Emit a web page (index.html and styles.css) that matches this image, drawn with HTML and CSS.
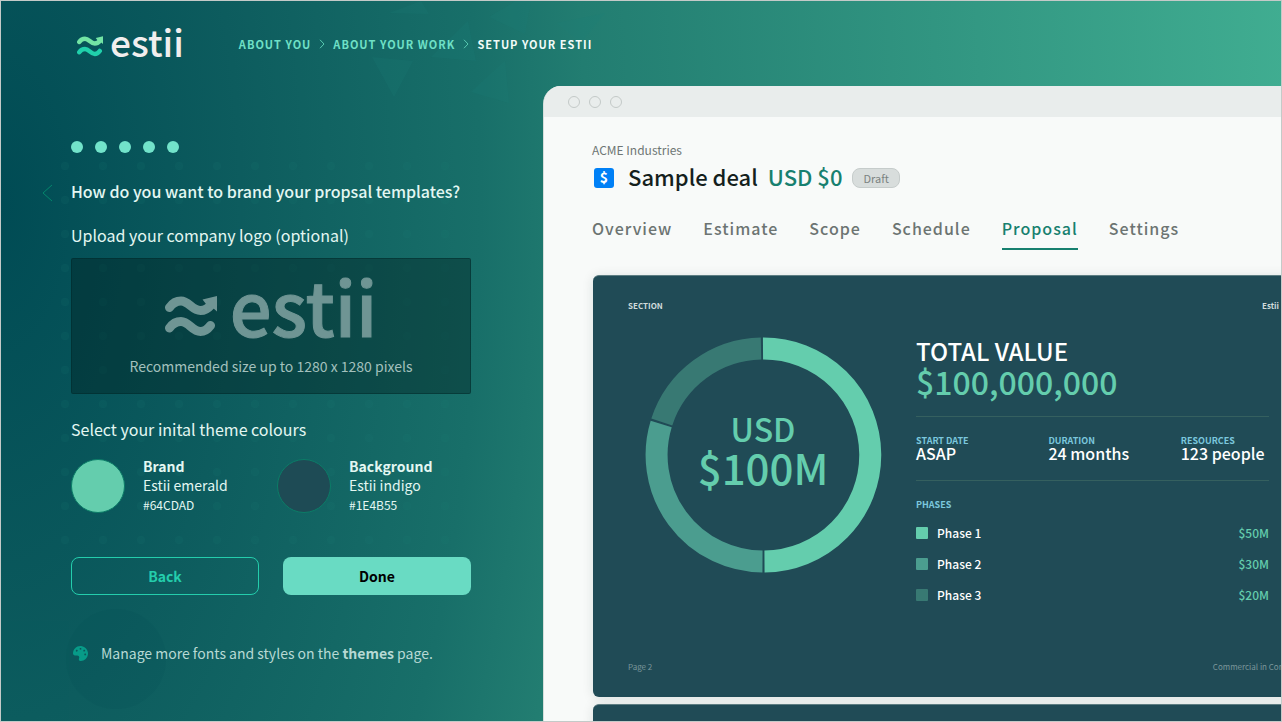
FILE: index.html
```html
<!DOCTYPE html>
<html lang="en">
<head>
<meta charset="utf-8">
<title>Setup your Estii</title>
<meta name="viewport" content="width=device-width, initial-scale=1">
<link rel="stylesheet" href="styles.css">
</head>
<body>
<svg class="defs" aria-hidden="true">
  <symbol id="waves" viewBox="0 0 52 41">
    <g fill="none" stroke-width="9" stroke-linecap="round">
      <path class="wave-top" d="M4.500 11.500C8 6.500 12 5 16 5C24 5 27 14.500 35.500 14.500C40 14.500 43 12.500 46 9"/>
      <path class="wave-bottom" d="M4.500 32C8 27 12 25.500 16 25.500C24 25.500 27 35.500 35.500 35.500C39.500 35.500 42.500 33.500 45.500 29.500"/>
    </g>
    <path class="wave-tip" d="M37.500 3.500L52 0V15.500L48 12L41 8Z"/>
  </symbol>
</svg>
<div class="page">
  <svg class="backdrop" aria-hidden="true">
    <defs>
      <pattern id="dots" x="45" y="148" width="38" height="34" patternUnits="userSpaceOnUse">
        <circle cx="19" cy="17" r="4" fill="#1d8078" fill-opacity=".12"/>
      </pattern>
    </defs>
    <rect x="45" y="148" width="418" height="408" fill="url(#dots)"/>
    <circle cx="115" cy="658" r="50" fill="#004850" fill-opacity=".12"/>
    <path d="M0 620H68V720H0Z" fill="#0b6060" fill-opacity=".1"/>
    <g fill="#1d8078" fill-opacity=".18">
      <path d="M371 56L412 60L393 96Z"/>
      <path d="M504 60L470 91L508 102Z"/>
      <path d="M556 22L604 12L580 42Z"/>
      <path d="M430 56L467 20L475 60Z"/>
      <path d="M388 12L420 0L428 13Z"/>
      <path d="M488 16L515 0H530L524 33Z"/>
    </g>
  </svg>

  <header class="topbar">
    <a class="logo" href="#" aria-label="estii">
      <svg class="logo-mark"><use href="#waves"/></svg>
      <span class="logo-word">estii</span>
    </a>
    <nav class="crumbs" aria-label="Progress">
      <a href="#">ABOUT YOU</a>
      <svg viewBox="0 0 6 10"><path d="M1 .8L5 5L1 9.200"/></svg>
      <a href="#">ABOUT YOUR WORK</a>
      <svg viewBox="0 0 6 10"><path d="M1 .8L5 5L1 9.200"/></svg>
      <a class="current" href="#">SETUP YOUR ESTII</a>
    </nav>
  </header>

  <div class="content">
    <main class="setup">
      <div class="steps"><i></i><i></i><i></i><i></i><i></i></div>
      <div class="question">
        <button class="prev" aria-label="Previous"><svg viewBox="0 0 11 18"><path d="M10 1L1 9L10 17"/></svg></button>
        <h1>How do you want to brand your propsal templates?</h1>
      </div>
      <h2>Upload your company logo (optional)</h2>
      <button class="upload">
        <span class="logo large">
          <svg class="logo-mark"><use href="#waves"/></svg>
          <span class="logo-word">estii</span>
        </span>
        <span class="hint">Recommended size up to 1280 x 1280 pixels</span>
      </button>
      <h2 class="colours-title">Select your inital theme colours</h2>
      <div class="colours">
        <button class="colour">
          <span class="swatch brand"></span>
          <span class="colour-text"><b>Brand</b><span>Estii emerald</span><small>#64CDAD</small></span>
        </button>
        <button class="colour">
          <span class="swatch background"></span>
          <span class="colour-text"><b>Background</b><span>Estii indigo</span><small>#1E4B55</small></span>
        </button>
      </div>
      <div class="actions">
        <button class="btn outline">Back</button>
        <button class="btn solid">Done</button>
      </div>
      <p class="note">
        <svg viewBox="0 0 512 512"><path fill-rule="evenodd" transform="translate(512 0) scale(-1 1)" d="M204.300 5C104.900 24.400 24.800 104.300 5.200 203.400c-37 187 131.700 326.400 258.800 306.700 41.200-6.400 61.400-54.600 42.500-91.700-23.100-45.400 9.900-98.400 60.900-98.400h79.700c35.800 0 64.800-29.600 64.900-65.300C511.500 97.100 368.100-26.900 204.300 5zM96 320c-17.700 0-32-14.300-32-32s14.300-32 32-32 32 14.300 32 32-14.300 32-32 32zm32-128c-17.700 0-32-14.300-32-32s14.300-32 32-32 32 14.300 32 32-14.300 32-32 32zm128-64c-17.700 0-32-14.300-32-32s14.300-32 32-32 32 14.300 32 32-14.300 32-32 32zm128 64c-17.700 0-32-14.300-32-32s14.300-32 32-32 32 14.300 32 32-14.300 32-32 32z"/></svg>
        <span>Manage more fonts and styles on the <a href="#">themes</a> page.</span>
      </p>
    </main>

    <section class="window" aria-label="Preview">
      <div class="titlebar"><i></i><i></i><i></i></div>
      <div class="deal">
        <div class="client">ACME Industries</div>
        <div class="deal-row">
          <span class="deal-icon">$</span>
          <span class="deal-name">Sample deal</span>
          <span class="deal-value">USD $0</span>
          <span class="badge">Draft</span>
        </div>
        <nav class="tabs">
          <a href="#">Overview</a>
          <a href="#">Estimate</a>
          <a href="#">Scope</a>
          <a href="#">Schedule</a>
          <a class="active" href="#">Proposal</a>
          <a href="#">Settings</a>
        </nav>
        <article class="slide">
          <div class="slide-head"><span>SECTION</span><span class="slide-brand">Estii</span></div>
          <div class="slide-body">
            <div class="donut">
              <svg viewBox="0 0 236 236" fill="none" stroke-width="22">
                <path stroke="#64cdad" d="M118 11.500A106.500 106.500 0 0 1 119.500 224.500"/>
                <path stroke="#4b9d8f" d="M117.500 224.500A106.500 106.500 0 0 1 16.200 87"/>
                <path stroke="#387973" d="M16.800 85A106.500 106.500 0 0 1 116 11.500"/>
              </svg>
              <div class="donut-label"><span>USD</span><strong>$100M</strong></div>
            </div>
            <div class="facts">
              <div class="total-label">TOTAL VALUE</div>
              <div class="total-value">$100,000,000</div>
              <dl class="stats">
                <div><dt>START DATE</dt><dd>ASAP</dd></div>
                <div><dt>DURATION</dt><dd>24 months</dd></div>
                <div><dt>RESOURCES</dt><dd>123 people</dd></div>
              </dl>
              <div class="phases-label">PHASES</div>
              <ul class="phases">
                <li><i class="p1"></i><span>Phase 1</span><em>$50M</em></li>
                <li><i class="p2"></i><span>Phase 2</span><em>$30M</em></li>
                <li><i class="p3"></i><span>Phase 3</span><em>$20M</em></li>
              </ul>
            </div>
          </div>
          <div class="slide-foot"><span>Page 2</span><span>Commercial in Confidence</span></div>
        </article>
        <article class="slide next"></article>
      </div>
    </section>
  </div>
</div>
</body>
</html>
```
FILE: styles.css
```css
* { box-sizing: border-box; }

body {
  margin: 0;
  font-family: "Noto Sans CJK SC", "Noto Sans", sans-serif;
  color: #e3f7f2;
}

h1, h2, p, dl, dd, ul { margin: 0; padding: 0; }
ul { list-style: none; }
a { color: inherit; text-decoration: none; }
button { font: inherit; color: inherit; background: none; border: 0; padding: 0; cursor: pointer; }
svg { display: block; flex: none; }
.defs { position: absolute; width: 0; height: 0; }

.page {
  position: relative;
  display: flex;
  flex-direction: column;
  height: 100vh;
  overflow: hidden;
  border: 1px solid #c4cac8;
  background: radial-gradient(104% 400% at 0 28%, #004b54 0%, #0d5c5e 18%, #186f69 36%, #227d71 44%, #42b093 100%);
}
.backdrop { position: absolute; inset: 0; width: 100%; height: 100%; pointer-events: none; }

/* Top bar */
.topbar {
  position: relative;
  flex: none;
  display: flex;
  align-items: center;
  gap: 55px;
  height: 85px;
  padding-left: 76px;
}
.logo { display: flex; align-items: baseline; gap: 7px; padding-bottom: 6px; --top: #73e4a4; --bottom: #20d0ab; --word: #f1eeee; }
.logo-mark { width: 26px; height: 21px; }
.wave-top { stroke: var(--top); }
.wave-tip { fill: var(--top); }
.wave-bottom { stroke: var(--bottom); }
.logo-word {
  color: var(--word);
  font-size: 37px;
  line-height: 40px;
  font-weight: 500;
}
.crumbs {
  display: flex;
  align-items: center;
  gap: 8px;
  font-size: 11px;
  line-height: 16px;
  font-weight: 700;
  letter-spacing: 1px;
  color: #6fe0c6;
}
.crumbs svg { width: 6px; height: 10px; fill: none; stroke: #58c9b0; stroke-width: 1; }
.crumbs .current { color: #f1fbf8; }

/* Columns */
.content {
  position: relative;
  flex: 1;
  min-height: 0;
  display: grid;
  grid-template-columns: 542px minmax(0, 1fr);
}

/* Setup form */
.setup { padding: 55px 72px 0 70px; }
.steps { display: flex; gap: 12px; }
.steps i { width: 12px; height: 12px; border-radius: 50%; background: #72e3ca; }
.question { display: flex; align-items: center; gap: 18px; margin: 25px 0 0 -29px; }
.prev { padding-top: 4px; }
.prev svg { width: 11px; height: 18px; fill: none; stroke: #04866c; stroke-width: 1; }
h1 { font-size: 16px; line-height: 26px; font-weight: 500; white-space: nowrap; }
h2 { margin-top: 18px; font-size: 16px; line-height: 26px; font-weight: 400; }
.upload {
  display: flex;
  flex-direction: column;
  align-items: center;
  width: 100%;
  height: 136px;
  margin-top: 10px;
  padding-top: 18px;
  border: 1px solid rgba(0, 40, 40, .45);
  border-radius: 2px;
  background: rgba(0, 25, 25, .38);
}
.large { --top: #6f9594; --bottom: #6f9594; --word: #6f9594; gap: 13px; padding: 0; }
.large .logo-mark { width: 52px; height: 41px; }
.large .logo-word { font-size: 74px; line-height: 56px; -webkit-text-stroke: 1px var(--word); }
.hint { margin-top: 18px; font-size: 14px; line-height: 22px; color: #a3c0bd; }
.colours-title { margin-top: 22px; }
.colours { display: grid; grid-template-columns: 1fr 1fr; gap: 12px; margin-top: 15px; }
.colour { display: flex; align-items: center; gap: 18px; text-align: left; }
.swatch { flex: none; width: 54px; height: 54px; border: 1px solid #0b7c67; border-radius: 50%; }
.swatch.brand { background: #64cdad; }
.swatch.background { background: #1e4b55; }
.colour-text { display: flex; flex-direction: column; font-size: 14px; line-height: 19px; }
.colour-text b { font-weight: 700; }
.colour-text small { font-size: 12px; }
.actions { display: grid; grid-template-columns: 1fr 1fr; gap: 24px; margin-top: 43px; }
.btn { height: 38px; border-radius: 8px; font-size: 14px; font-weight: 700; }
.outline { border: 1px solid #24cdac; color: #24cdac; }
.solid { background: #69dbc3; color: #000; }
.note {
  display: flex;
  align-items: center;
  gap: 13px;
  margin-top: 46px;
  padding-left: 2px;
  font-size: 14px;
  line-height: 24px;
  color: #b7d9d4;
  white-space: nowrap;
}
.note svg { width: 15px; height: 15px; fill: #079b88; }
.note a { font-weight: 700; }

/* Preview window */
.window {
  overflow: hidden;
  border-left: 1px solid #d5dedb;
  border-radius: 18px 0 0 0;
  background: #f8faf9;
  color: #151f1d;
}
.titlebar { display: flex; align-items: center; gap: 9px; height: 31px; padding-left: 24px; background: #e9edec; }
.titlebar i { width: 12px; height: 12px; border: 1px solid #c3c9c7; border-radius: 50%; }
.deal { padding: 23px 0 0 48px; }
.client { font-size: 12px; line-height: 20px; color: #6e7674; }
.deal-row { display: flex; align-items: center; height: 36px; padding-left: 2px; font-size: 22px; line-height: 32px; font-weight: 500; white-space: nowrap; }
.deal-icon {
  width: 20px;
  height: 20px;
  margin-right: 14px;
  border-radius: 3px;
  background: #0080f6;
  color: #fff;
  font-size: 14px;
  line-height: 18px;
  font-weight: 700;
  text-align: center;
}
.deal-name, .deal-value { padding-bottom: 4px; }
.deal-value { margin-left: 10px; color: #17806f; }
.badge {
  margin-left: 10px;
  padding: 0 10px;
  border: 1px solid #c6cccb;
  border-radius: 8px;
  background: #d8dddc;
  color: #7b8381;
  font-size: 11px;
  line-height: 18px;
  font-weight: 400;
}
.tabs { display: flex; gap: 31px; margin-top: 18px; font-size: 16px; line-height: 28px; font-weight: 500; letter-spacing: 1px; color: #6c7472; }
.tabs a { height: 36px; }
.tabs .active { color: #17806f; border-bottom: 2px solid #17806f; }

/* Slide */
.slide {
  display: flex;
  flex-direction: column;
  width: 752px;
  height: 422px;
  margin: 25px 0 0 1px;
  padding: 22px 34px 22px 35px;
  border-top: 1px solid #5d7d82;
  border-radius: 6px;
  background: #204b56;
  box-shadow: 0 1px 12px rgba(20, 40, 40, .12);
  color: #fff;
}
.slide.next { margin-top: 7px; }
.slide-head, .slide-foot { display: flex; justify-content: space-between; font-size: 8px; line-height: 16px; }
.slide-head { font-weight: 700; color: #d0dbdc; }
.slide-brand { width: 49px; }
.slide-foot { margin-top: auto; color: #7b969a; }
.slide-body { display: flex; gap: 35px; margin: 23px 42px 0 17px; }
.donut { flex: none; display: grid; width: 236px; height: 236px; }
.donut svg, .donut-label { grid-area: 1 / 1; }
.donut svg { width: 236px; height: 236px; overflow: visible; }
.donut-label { display: flex; flex-direction: column; align-items: center; justify-content: center; padding-bottom: 14px; color: #64cdad; }
.donut-label span { font-size: 32px; line-height: 38px; font-weight: 500; }
.donut-label strong { font-size: 42px; line-height: 40px; font-weight: 500; }
.facts { flex: 1; }
.total-label { font-size: 24px; line-height: 28px; font-weight: 500; }
.total-value { font-size: 32px; line-height: 32px; font-weight: 500; color: #64cdad; }
.stats {
  display: grid;
  grid-template-columns: 3fr 3fr 2fr;
  margin-top: 19px;
  padding: 18px 0 21px;
  border: solid #35605f;
  border-width: 1px 0;
  white-space: nowrap;
}
.stats dt, .phases-label { font-size: 9px; line-height: 12px; font-weight: 700; color: #7bc7dd; }
.stats dd { font-size: 16px; line-height: 12px; font-weight: 500; }
.phases-label { margin-top: 18px; }
.phases { display: flex; flex-direction: column; gap: 11px; margin-top: 12px; font-size: 12px; line-height: 20px; font-weight: 500; }
.phases li { display: flex; align-items: center; gap: 9px; }
.phases i { width: 12px; height: 12px; border-radius: 1px; }
.phases em { margin-left: auto; font-style: normal; color: #64cdad; }
.p1 { background: #64cdad; }
.p2 { background: #4b9d8f; }
.p3 { background: #387973; }
```
